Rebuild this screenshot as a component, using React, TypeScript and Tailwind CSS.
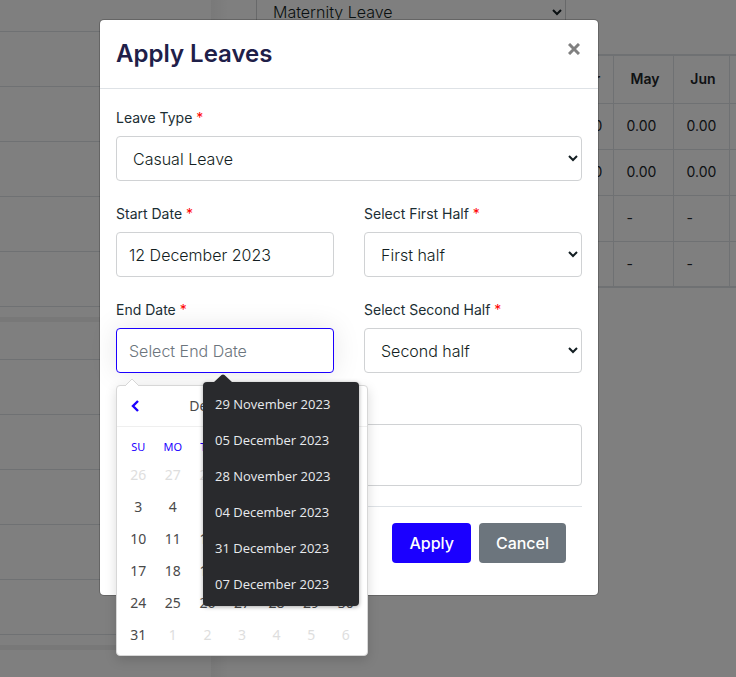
import React from "react";

const months = ["Jan", "Feb", "Mar", "Apr", "May", "Jun", "Jul"];

const leaveRows = [
  { name: "Casual", value: "0.00" },
  { name: "Sick", value: "0.00" },
  { name: "Maternity", value: "-" },
  { name: "Paternity", value: "-" },
];

const weekdays = ["SU", "MO", "TU", "WE", "TH", "FR", "SA"];

const days = [
  ...[26, 27, 28, 29, 30].map((day) => ({ day, muted: true })),
  ...Array.from({ length: 31 }, (_, i) => ({ day: i + 1, muted: false })),
  ...[1, 2, 3, 4, 5, 6].map((day) => ({ day, muted: true })),
];

const suggestions = [
  "29 November 2023",
  "05 December 2023",
  "28 November 2023",
  "04 December 2023",
  "31 December 2023",
  "07 December 2023",
];

const fieldClass =
  "block h-[45px] w-full rounded border border-[#d0d2d4] bg-white px-3 text-base font-light text-[#131e22] outline-none";

function Field({
  id,
  label,
  children,
}: {
  id: string;
  label: string;
  children: React.ReactNode;
}) {
  return (
    <div className="relative mb-5 min-w-0">
      <label htmlFor={id} className="mb-1.5 block text-sm leading-[25px] text-[#1b2e34]">
        {label} <span className="text-[#ff0000]">*</span>
      </label>
      {children}
    </div>
  );
}

function SidePanel({ first }: { first: string }) {
  return (
    <div className="border-b-[5px] border-[#f0f0f0] pb-2.5">
      <div className={`${first} border-b border-[#dee2e6]`} />
      {[1, 2, 3, 4, 5].map((row) => (
        <div key={row} className="h-[55px] border-b border-[#dee2e6]" />
      ))}
    </div>
  );
}

function LeavePage() {
  return (
    <div className="flex h-full overflow-hidden bg-white" aria-hidden="true">
      <div className="w-[211px] shrink-0">
        <SidePanel first="h-8" />
        <SidePanel first="h-[38px]" />
      </div>
      <div className="w-[45px] shrink-0 bg-linear-to-r from-[#f3f3f3] to-white to-40%" />
      <div className="min-w-0 flex-1 overflow-hidden">
        <select
          tabIndex={-1}
          aria-label="Leave"
          className="mb-[30px] block h-6 w-[310px] border-x border-[#d0d2d4] bg-white px-3 text-base font-light text-[#131e22]"
        >
          <option>Maternity Leave</option>
        </select>
        <table className="w-[530px] table-fixed border-collapse border-2 border-[#dee2e6] text-sm text-[#212529]">
          <colgroup>
            <col className="w-[119px]" />
            <col className="w-[60px]" />
            <col className="w-[60px]" />
            <col className="w-[63px]" />
            <col className="w-[54px]" />
            <col className="w-[60px]" />
            <col className="w-[56px]" />
            <col className="w-[58px]" />
          </colgroup>
          <thead>
            <tr className="h-12">
              <th className="border border-[#dee2e6] font-semibold">Type</th>
              {months.map((month) => (
                <th key={month} className="border border-[#dee2e6] pl-1 font-semibold">
                  {month}
                </th>
              ))}
            </tr>
          </thead>
          <tbody>
            {leaveRows.map((row) => (
              <tr key={row.name} className="h-[46px]">
                <td className="border border-[#dee2e6] pl-[13px]">{row.name}</td>
                {months.map((month) => (
                  <td key={month} className="border border-[#dee2e6] pl-[13px]">
                    {row.value}
                  </td>
                ))}
              </tr>
            ))}
          </tbody>
        </table>
      </div>
    </div>
  );
}

function Calendar() {
  return (
    <div className="absolute top-full left-0 z-10 mt-3 w-[252px] rounded border border-[#d7d7d7] bg-white font-['Noto_Sans',sans-serif] text-[#4a4a4a] shadow-[0_4px_12px_rgba(0,0,0,0.15)]">
      <svg viewBox="0 0 16 9" className="absolute -top-2 left-[7px] h-[9px] w-4" aria-hidden="true">
        <path d="M1 8 8 1l7 7" fill="#fff" stroke="#d7d7d7" />
        <path d="M1 8.5h14" stroke="#fff" />
      </svg>
      <div className="flex h-[41px] items-center border-b border-[#efefef] px-3">
        <button type="button" aria-label="Previous month" className="w-4">
          <svg viewBox="0 0 12 12" className="h-3 w-3" fill="none" stroke="#1b00ff" strokeWidth="2.4">
            <path d="M9 1 4 6l5 5" />
          </svg>
        </button>
        <div className="flex-1 text-center text-sm">
          December, <i className="text-[#9c9c9c] not-italic">2023</i>
        </div>
        <button type="button" aria-label="Next month" className="w-4">
          <svg viewBox="0 0 12 12" className="h-3 w-3" fill="none" stroke="#1b00ff" strokeWidth="2.4">
            <path d="m4 1 5 5-5 5" />
          </svg>
        </button>
      </div>
      <div className="p-1">
        <div className="grid h-7 grid-cols-7 items-center pt-1 text-center text-[11px] text-[#1b00ff]">
          {weekdays.map((name) => (
            <span key={name}>{name}</span>
          ))}
        </div>
        <div className="grid grid-cols-7 text-sm">
          {days.map(({ day, muted }, i) => (
            <button
              type="button"
              key={i}
              className={muted ? "h-8 text-center text-[#dedede]" : "h-8 text-center"}
            >
              {day}
            </button>
          ))}
        </div>
      </div>
    </div>
  );
}

function Suggestions() {
  return (
    <div className="absolute top-full left-[87px] z-20 mt-[9px] w-[156px] rounded bg-[#292a2d] py-1 font-['Open_Sans',sans-serif] text-[13px] text-[#e8eaed] shadow-[0_1px_4px_rgba(0,0,0,0.35)]">
      <svg viewBox="0 0 20 9" className="absolute -top-2 left-2.5 h-[9px] w-5" aria-hidden="true">
        <path d="M0 9 8.500 1Q10 0 11.500 1L20 9Z" fill="#292a2d" />
      </svg>
      <ul>
        {suggestions.map((text) => (
          <li key={text} className="h-9 px-3 leading-9 whitespace-nowrap">
            {text}
          </li>
        ))}
      </ul>
    </div>
  );
}

export default function App() {
  return (
    <div className="relative h-screen overflow-hidden font-['Inter',sans-serif]">
      <LeavePage />
      <div className="absolute inset-0 bg-black/50 pt-[19px] pl-[99px]">
        <div
          role="dialog"
          aria-labelledby="dialog-title"
          className="w-full max-w-[500px] rounded-[5px] border border-black/20 bg-white bg-clip-padding"
        >
          <header className="flex items-start justify-between border-b border-[#dee2e6] p-4">
            <h1 id="dialog-title" className="text-2xl leading-9 font-semibold text-[#1f2049]">
              Apply Leaves
            </h1>
            <button
              type="button"
              aria-label="Close"
              className="flex h-[26px] w-[17px] items-center justify-center text-[#808080]"
            >
              <svg viewBox="0 0 12 12" className="h-3 w-3" fill="none" stroke="currentColor" strokeWidth="3">
                <path d="m1 1 10 10M11 1 1 11" />
              </svg>
            </button>
          </header>
          <form className="px-4 pt-4 pb-8" autoComplete="off" onSubmit={(e) => e.preventDefault()}>
            <Field id="leave-type" label="Leave Type">
              <select id="leave-type" className={fieldClass}>
                <option>Casual Leave</option>
              </select>
            </Field>
            <div className="grid grid-cols-2 gap-x-[30px]">
              <Field id="start-date" label="Start Date">
                <input id="start-date" className={fieldClass} defaultValue="12 December 2023" />
              </Field>
              <Field id="first-half" label="Select First Half">
                <select id="first-half" className={fieldClass}>
                  <option>First half</option>
                </select>
              </Field>
              <Field id="end-date" label="End Date">
                <input
                  id="end-date"
                  placeholder="Select End Date"
                  className="block h-[45px] w-full rounded border border-[#1b00ff] bg-white px-3 text-base font-light shadow-[0_0_28px_rgba(0,0,0,0.1)] outline-none placeholder:text-[#6c757d]"
                />
                <Calendar />
                <Suggestions />
              </Field>
              <Field id="second-half" label="Select Second Half">
                <select id="second-half" className={fieldClass}>
                  <option>Second half</option>
                </select>
              </Field>
            </div>
            <Field id="reason" label="Reason">
              <textarea
                id="reason"
                className="block h-[62px] w-full resize-none rounded border border-[#d0d2d4] px-3 py-2 outline-none"
              />
            </Field>
            <div className="flex justify-end gap-2 border-t border-[#dee2e6] pt-4 pr-4 text-base font-medium text-white">
              <button type="submit" className="h-10 rounded bg-[#1b00ff] px-[17px]">
                Apply
              </button>
              <button type="button" className="h-10 rounded bg-[#6c757d] px-[17px]">
                Cancel
              </button>
            </div>
          </form>
        </div>
      </div>
    </div>
  );
}
